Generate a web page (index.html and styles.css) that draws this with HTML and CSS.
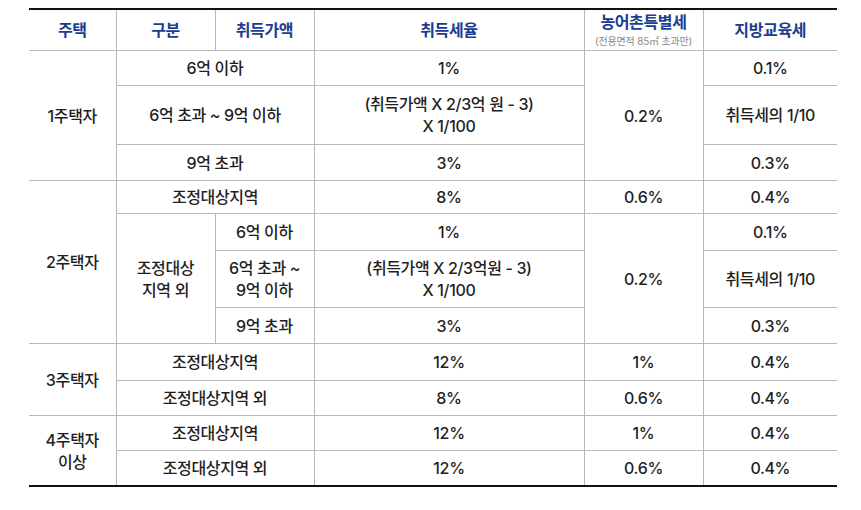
FILE: index.html
```html
<!DOCTYPE html>
<html lang="ko">
<head>
<meta charset="utf-8">
<link rel="stylesheet" href="styles.css">
</head>
<body>
<table class="tax">
  <colgroup>
    <col class="c1"><col class="c2"><col class="c3"><col class="c4"><col class="c5"><col class="c6">
  </colgroup>
  <thead>
    <tr class="h-head">
      <th>주택</th>
      <th>구분</th>
      <th>취득가액</th>
      <th>취득세율</th>
      <th>농어촌특별세<span class="note">(전용면적 85㎡ 초과만)</span></th>
      <th>지방교육세</th>
    </tr>
  </thead>
  <tbody>
    <tr class="h35">
      <td rowspan="3">1주택자</td>
      <td colspan="2">6억 이하</td>
      <td>1%</td>
      <td rowspan="3">0.2%</td>
      <td>0.1%</td>
    </tr>
    <tr class="h59">
      <td colspan="2">6억 초과 ~ 9억 이하</td>
      <td>(취득가액 X 2/3억 원 - 3)<br>X 1/100</td>
      <td>취득세의 1/10</td>
    </tr>
    <tr class="h36">
      <td colspan="2">9억 초과</td>
      <td>3%</td>
      <td>0.3%</td>
    </tr>
    <tr class="h33">
      <td rowspan="4">2주택자</td>
      <td colspan="2">조정대상지역</td>
      <td>8%</td>
      <td>0.6%</td>
      <td>0.4%</td>
    </tr>
    <tr class="h37">
      <td rowspan="3">조정대상<br>지역 외</td>
      <td>6억 이하</td>
      <td>1%</td>
      <td rowspan="3">0.2%</td>
      <td>0.1%</td>
    </tr>
    <tr class="h57">
      <td>6억 초과 ~<br>9억 이하</td>
      <td>(취득가액 X 2/3억원 - 3)<br>X 1/100</td>
      <td>취득세의 1/10</td>
    </tr>
    <tr class="h36">
      <td>9억 초과</td>
      <td>3%</td>
      <td>0.3%</td>
    </tr>
    <tr class="h37">
      <td rowspan="2">3주택자</td>
      <td colspan="2">조정대상지역</td>
      <td>12%</td>
      <td>1%</td>
      <td>0.4%</td>
    </tr>
    <tr class="h35">
      <td colspan="2">조정대상지역 외</td>
      <td>8%</td>
      <td>0.6%</td>
      <td>0.4%</td>
    </tr>
    <tr class="h35">
      <td rowspan="2">4주택자<br>이상</td>
      <td colspan="2">조정대상지역</td>
      <td>12%</td>
      <td>1%</td>
      <td>0.4%</td>
    </tr>
    <tr class="h35 last">
      <td colspan="2">조정대상지역 외</td>
      <td>12%</td>
      <td>0.6%</td>
      <td>0.4%</td>
    </tr>
  </tbody>
</table>
</body>
</html>
```

FILE: styles.css
```css
html, body {
  margin: 0;
  padding: 0;
  background: #ffffff;
}

body {
  padding: 8px 0 0 29px;
  font-family: "Inter", "Noto Sans CJK KR", "Noto Sans", sans-serif;
  color: #1f1f1f;
}

.tax {
  border-collapse: collapse;
  table-layout: fixed;
  width: 808px;
  border-top: 2px solid #111111;
  border-bottom: 2px solid #111111;
}

.c1 { width: 87px; }
.c2 { width: 99px; }
.c3 { width: 99px; }
.c4 { width: 270px; }
.c5 { width: 119px; }
.c6 { width: 134px; }

.tax th,
.tax td {
  border: 1px solid #b8b8b8;
  padding: 0;
  text-align: center;
  vertical-align: middle;
  font-size: 16px;
  font-weight: 500;
  line-height: 22px;
  letter-spacing: -0.35px;
}

.tax th:first-child,
.tax td:first-child {
  border-left: none;
}

.tax th:last-child,
.tax td:last-child {
  border-right: none;
}

.tax th {
  color: #1a3d91;
  font-weight: 700;
  line-height: 20px;
  height: 40px;
}

.tax .note {
  display: block;
  font-size: 10px;
  line-height: 13px;
  margin-top: 3px;
  font-weight: 400;
  color: #8a8a8a;
  letter-spacing: -0.2px;
}

.tax thead th {
  border-top: none;
}

.tax tr.last td {
  border-bottom: 2px solid #111111;
}

.h33 td { height: 32px; }
.h35 td { height: 34px; }
.h36 td { height: 35px; }
.h37 td { height: 36px; }
.h57 td { height: 56px; }
.h59 td { height: 58px; }
```
